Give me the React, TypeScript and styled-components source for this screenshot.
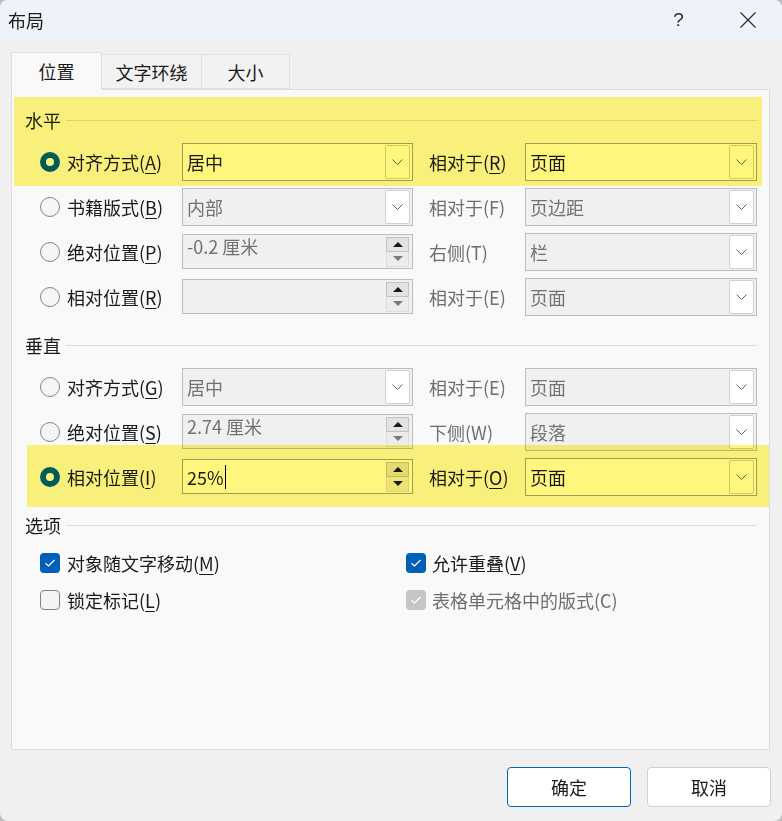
import React from "react";
import styled, { createGlobalStyle } from "styled-components";

const GlobalStyle = createGlobalStyle`
  html, body {
    margin: 0;
    padding: 0;
    background: #bfbfbf;
  }
  body {
    font-family: "Noto Sans CJK SC", "Noto Sans", sans-serif;
    color: #1a1a1a;
  }
`;

const Window = styled.div`
  width: 782px;
  height: 821px;
  background: #f0f0f0;
  display: flex;
  flex-direction: column;
  border-radius: 8px;
  overflow: hidden;
`;

const TitleBar = styled.div`
  height: 40px;
  flex: none;
  background: #eef3f9;
  display: flex;
  align-items: center;
  padding-left: 8px;
  font-size: 18px;
`;

const TitleText = styled.span`
  flex: 1;
`;

const TitleButton = styled.span`
  width: 69px;
  height: 40px;
  display: flex;
  align-items: center;
  justify-content: center;
  font-family: "Liberation Sans", sans-serif;
  font-size: 19px;
  font-weight: 300;
  color: #2b2b2b;
`;

const Body = styled.div`
  flex: 1;
  display: flex;
  flex-direction: column;
  padding: 12px 12px 0 11px;
`;

const TabStrip = styled.div`
  height: 37px;
  display: flex;
  align-items: flex-end;
  position: relative;
  z-index: 1;
`;

const Tab = styled.div<{ $active?: boolean; $w: number }>`
  width: ${(p) => p.$w}px;
  height: ${(p) => (p.$active ? 38 : 35)}px;
  box-sizing: border-box;
  margin-bottom: ${(p) => (p.$active ? -1 : 0)}px;
  border: 1px solid #e0e0e0;
  border-bottom: ${(p) => (p.$active ? "none" : "1px solid #e0e0e0")};
  margin-left: ${(p) => (p.$active ? 0 : -1)}px;
  background: ${(p) => (p.$active ? "#f9f9f9" : "#f2f2f2")};
  display: flex;
  align-items: center;
  justify-content: center;
  font-size: 18px;
  padding-bottom: ${(p) => (p.$active ? 2 : 0)}px;
`;

const Panel = styled.div`
  height: 661px;
  box-sizing: border-box;
  background: #f9f9f9;
  border: 1px solid #dedede;
  position: relative;
  padding: 18px 12px 0 13px;
  display: flex;
  flex-direction: column;
`;

const Highlight = styled.div<{ $x: number; $y: number; $w: number; $h: number }>`
  position: absolute;
  left: ${(p) => p.$x}px;
  top: ${(p) => p.$y}px;
  width: ${(p) => p.$w}px;
  height: ${(p) => p.$h}px;
  background: #fff67e;
  mix-blend-mode: multiply;
  pointer-events: none;
`;

const SectionHeader = styled.div<{ $gap?: number }>`
  height: 24px;
  margin-top: ${(p) => p.$gap ?? 0}px;
  display: flex;
  align-items: center;
  gap: 5px;
  font-size: 18px;

  &::after {
    content: "";
    flex: 1;
    height: 1px;
    background: #dcdcdc;
  }
`;

const Rows = styled.div`
  margin-top: 7px;
  display: flex;
  flex-direction: column;
`;

const Row = styled.div`
  height: 45px;
  display: grid;
  grid-template-columns: 157px 231px 16px 96px 232px;
  align-items: center;
`;

const OptionLabel = styled.label<{ $muted?: boolean }>`
  display: flex;
  align-items: center;
  gap: 7px;
  padding-left: 15px;
  font-size: 18px;
  white-space: nowrap;
  color: ${(p) => (p.$muted ? "#6e6e6e" : "#1a1a1a")};
`;

const Radio = styled.span<{ $on?: boolean }>`
  width: 20px;
  height: 20px;
  box-sizing: border-box;
  border-radius: 50%;
  flex: none;
  border: ${(p) => (p.$on ? "6px solid #005fb8" : "1px solid #858585")};
  background: ${(p) => (p.$on ? "#ffffff" : "#f5f5f5")};
`;

const Key = styled.u`
  text-underline-offset: 3px;
  text-decoration-thickness: 1px;
`;

const SideLabel = styled.span<{ $muted?: boolean }>`
  grid-column: 4;
  font-size: 18px;
  white-space: nowrap;
  color: ${(p) => (p.$muted ? "#6e6e6e" : "#1a1a1a")};
`;

const Field = styled.div<{ $disabled?: boolean; $h: number; $col: number }>`
  grid-column: ${(p) => p.$col};
  height: ${(p) => p.$h}px;
  box-sizing: border-box;
  border: 1px solid ${(p) => (p.$disabled ? "#bdbdbd" : "#a3a3a3")};
  background: ${(p) => (p.$disabled ? "#f0f0f0" : "#ffffff")};
  color: ${(p) => (p.$disabled ? "#727272" : "#1a1a1a")};
  display: flex;
  align-items: center;
  padding: 0 2px 0 4px;
  font-size: 18px;
`;

const FieldValue = styled.span<{ $top?: boolean }>`
  flex: 1;
  display: flex;
  align-items: center;
  align-self: ${(p) => (p.$top ? "flex-start" : "center")};
  margin-top: ${(p) => (p.$top ? -2 : 0)}px;
  white-space: nowrap;
`;

const Caret = styled.span`
  width: 1px;
  height: 24px;
  background: #000;
  margin-left: 1px;
`;

const DropButton = styled.span`
  width: 25px;
  height: 34px;
  box-sizing: border-box;
  border: 1px solid #d0d0d0;
  border-radius: 2px;
  background: #ffffff;
  display: flex;
  align-items: center;
  justify-content: center;
`;

const SpinButtons = styled.span`
  width: 23px;
  height: 30px;
  margin-right: 1px;
  display: flex;
  flex-direction: column;
`;

const SpinHalf = styled.span<{ $up?: boolean }>`
  flex: 1;
  box-sizing: border-box;
  border: 1px solid ${(p) => (p.$up ? "#c2c2c2" : "#dddddd")};
  border-top: ${(p) => (p.$up ? "1px solid #c2c2c2" : "none")};
  background: ${(p) => (p.$up ? "#e3e3e3" : "#ececec")};
  display: flex;
  align-items: center;
  justify-content: center;
`;

const CheckGrid = styled.div`
  margin-top: 7px;
  display: grid;
  grid-template-columns: 381px 1fr;
  grid-auto-rows: 37px;
  align-items: center;
`;

const CheckLabel = styled.label<{ $muted?: boolean; $first?: boolean }>`
  display: flex;
  align-items: center;
  gap: ${(p) => (p.$first ? 7 : 6)}px;
  padding-left: ${(p) => (p.$first ? 15 : 0)}px;
  font-size: 18px;
  white-space: nowrap;
  color: ${(p) => (p.$muted ? "#6e6e6e" : "#1a1a1a")};
`;

const Box = styled.span<{ $state: "on" | "off" | "dim" }>`
  width: 20px;
  height: 20px;
  box-sizing: border-box;
  border-radius: 4px;
  flex: none;
  display: flex;
  align-items: center;
  justify-content: center;
  border: ${(p) => (p.$state === "off" ? "1px solid #858585" : "none")};
  background: ${(p) =>
    p.$state === "on" ? "#005fb8" : p.$state === "dim" ? "#c6c6c6" : "#f3f3f3"};
`;

const Footer = styled.div`
  flex: 1;
  display: flex;
  justify-content: flex-end;
  align-items: flex-start;
  gap: 16px;
  padding-top: 17px;
  margin-right: -1px;
`;

const Button = styled.button<{ $primary?: boolean }>`
  width: 124px;
  height: 40px;
  box-sizing: border-box;
  border-radius: 4px;
  background: #ffffff;
  border: 1px solid ${(p) => (p.$primary ? "#0067c0" : "#d0d0d0")};
  font-family: "Noto Sans CJK SC", sans-serif;
  font-size: 18px;
  color: #1a1a1a;
  padding: 0;
`;

const Chevron = () => (
  <svg width="11" height="6" viewBox="0 0 11 6">
    <path d="M0.5 0.5 L5.5 5.5 L10.5 0.5" fill="none" stroke="#606060" strokeWidth="1" />
  </svg>
);

const Tri = ({ up, dark }: { up?: boolean; dark?: boolean }) => (
  <svg width="10" height="5" viewBox="0 0 10 5">
    <polygon points={up ? "0,5 5,0 10,5" : "0,0 10,0 5,5"} fill={dark ? "#1a1a1a" : "#7a7a7a"} />
  </svg>
);

const Tick = () => (
  <svg width="12" height="10" viewBox="0 0 12 10">
    <path d="M1.5 5.2 L4.5 8 L10.5 2" fill="none" stroke="#ffffff" strokeWidth="1.2" />
  </svg>
);

type Label = { text: string; key?: string };

const Mnemonic = ({ l }: { l: Label }) =>
  l.key ? (
    <span>
      {l.text}(<Key>{l.key}</Key>)
    </span>
  ) : (
    <span>{l.text}</span>
  );

type RowData = {
  on?: boolean;
  label: Label;
  kind: "drop" | "spin";
  value: string;
  active?: boolean;
  side: Label;
  sideMuted?: boolean;
  sideValue: string;
  sideActive?: boolean;
};

const horizontal: RowData[] = [
  { on: true, label: { text: "对齐方式", key: "A" }, kind: "drop", value: "居中", active: true, side: { text: "相对于", key: "R" }, sideValue: "页面", sideActive: true },
  { label: { text: "书籍版式", key: "B" }, kind: "drop", value: "内部", side: { text: "相对于(F)" }, sideMuted: true, sideValue: "页边距" },
  { label: { text: "绝对位置", key: "P" }, kind: "spin", value: "-0.2 厘米", side: { text: "右侧(T)" }, sideMuted: true, sideValue: "栏" },
  { label: { text: "相对位置", key: "R" }, kind: "spin", value: "", side: { text: "相对于(E)" }, sideMuted: true, sideValue: "页面" },
];

const vertical: RowData[] = [
  { label: { text: "对齐方式", key: "G" }, kind: "drop", value: "居中", side: { text: "相对于(E)" }, sideMuted: true, sideValue: "页面" },
  { label: { text: "绝对位置", key: "S" }, kind: "spin", value: "2.74 厘米", side: { text: "下侧(W)" }, sideMuted: true, sideValue: "段落" },
  { on: true, label: { text: "相对位置", key: "I" }, kind: "spin", value: "25%", active: true, side: { text: "相对于", key: "O" }, sideValue: "页面", sideActive: true },
];

const Dropdown = ({ value, active, col }: { value: string; active?: boolean; col: number }) => (
  <Field $disabled={!active} $h={38} $col={col}>
    <FieldValue>{value}</FieldValue>
    <DropButton>
      <Chevron />
    </DropButton>
  </Field>
);

const Spinner = ({ value, active }: { value: string; active?: boolean }) => (
  <Field $disabled={!active} $h={35} $col={2}>
    <FieldValue $top={!active}>
      {value}
      {active && <Caret />}
    </FieldValue>
    <SpinButtons>
      <SpinHalf $up>
        <Tri up dark />
      </SpinHalf>
      <SpinHalf>
        <Tri dark={active} />
      </SpinHalf>
    </SpinButtons>
  </Field>
);

const PositionRow = ({ r }: { r: RowData }) => (
  <Row>
    <OptionLabel>
      <Radio $on={r.on} />
      <Mnemonic l={r.label} />
    </OptionLabel>
    {r.kind === "drop" ? <Dropdown value={r.value} active={r.active} col={2} /> : <Spinner value={r.value} active={r.active} />}
    <SideLabel $muted={r.sideMuted}>
      <Mnemonic l={r.side} />
    </SideLabel>
    <Dropdown value={r.sideValue} active={r.sideActive} col={5} />
  </Row>
);

export default function App() {
  return (
    <Window>
      <GlobalStyle />
      <TitleBar>
        <TitleText>布局</TitleText>
        <TitleButton>?</TitleButton>
        <TitleButton>
          <svg width="18" height="18" viewBox="0 0 18 18">
            <path d="M1.5 1.5 L16.5 16.5 M16.5 1.5 L1.5 16.5" stroke="#2b2b2b" strokeWidth="1.2" />
          </svg>
        </TitleButton>
      </TitleBar>
      <Body>
        <TabStrip>
          <Tab $active $w={91}>位置</Tab>
          <Tab $w={101}>文字环绕</Tab>
          <Tab $w={89}>大小</Tab>
        </TabStrip>
        <Panel>
          <SectionHeader>水平</SectionHeader>
          <Rows>
            {horizontal.map((r, i) => (
              <PositionRow key={i} r={r} />
            ))}
          </Rows>
          <SectionHeader $gap={14}>垂直</SectionHeader>
          <Rows>
            {vertical.map((r, i) => (
              <PositionRow key={i} r={r} />
            ))}
          </Rows>
          <SectionHeader $gap={14}>选项</SectionHeader>
          <CheckGrid>
            <CheckLabel $first>
              <Box $state="on">
                <Tick />
              </Box>
              <span>
                对象随文字移动(<Key>M</Key>)
              </span>
            </CheckLabel>
            <CheckLabel>
              <Box $state="on">
                <Tick />
              </Box>
              <span>
                允许重叠(<Key>V</Key>)
              </span>
            </CheckLabel>
            <CheckLabel $first>
              <Box $state="off" />
              <span>
                锁定标记(<Key>L</Key>)
              </span>
            </CheckLabel>
            <CheckLabel $muted>
              <Box $state="dim">
                <Tick />
              </Box>
              <span>表格单元格中的版式(C)</span>
            </CheckLabel>
          </CheckGrid>
          <Highlight $x={2} $y={7} $w={748} $h={89} />
          <Highlight $x={15} $y={355} $w={742} $h={62} />
        </Panel>
        <Footer>
          <Button $primary>确定</Button>
          <Button>取消</Button>
        </Footer>
      </Body>
    </Window>
  );
}
